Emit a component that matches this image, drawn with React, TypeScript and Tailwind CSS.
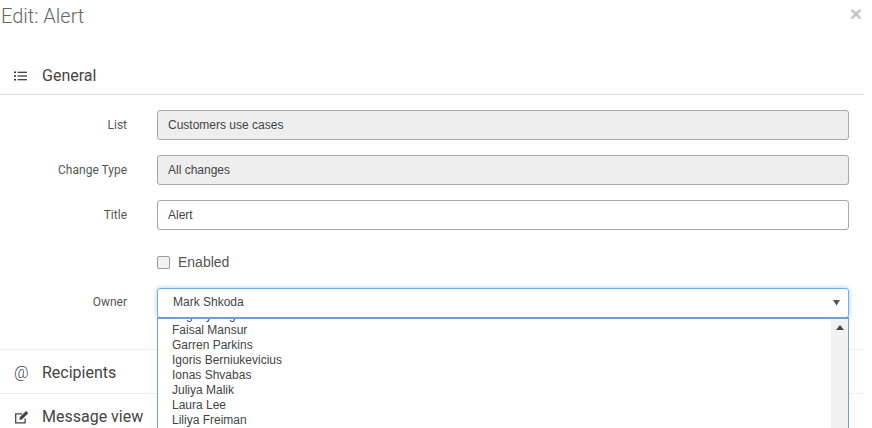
import React from "react";

const sans = "font-['Liberation_Sans',Arial,sans-serif]";
const rob = "font-['Roboto',sans-serif]";

function Label({ children }: { children: React.ReactNode }) {
  return <div className={`w-[127px] shrink-0 text-right text-[12px] text-[#555] ${rob}`}>{children}</div>;
}

function Row({ label, value, disabled, mb }: { label: string; value: string; disabled?: boolean; mb: string }) {
  return (
    <div className={`flex items-center ${mb}`}>
      <Label>{label}</Label>
      <div
        className={`ml-[30px] flex h-[30px] w-[692px] items-center rounded-[3px] border border-[#a9a9a9] pb-[1px] pl-[10px] text-[12px] text-[#444] ${sans} ${
          disabled ? "bg-[#eeeeee]" : "bg-white"
        }`}
      >
        {value}
      </div>
    </div>
  );
}

function ListIcon() {
  return (
    <svg width="13" height="10" viewBox="0 0 13 10" className="shrink-0 text-[#333]">
      <g fill="currentColor">
        <rect x="0" y="0.5" width="2" height="1.6" />
        <rect x="0" y="4.2" width="2" height="1.6" />
        <rect x="0" y="7.9" width="2" height="1.6" />
        <rect x="3.5" y="0.7" width="9.5" height="1.2" />
        <rect x="3.5" y="4.4" width="9.5" height="1.2" />
        <rect x="3.5" y="8.1" width="9.5" height="1.2" />
      </g>
    </svg>
  );
}

function EditIcon() {
  return (
    <svg width="15" height="14" viewBox="0 0 14 13" className="shrink-0 text-[#444]">
      <path d="M1 3h6.5v1.2H2.2v7.1h7.6V8H11v4.5H1z" fill="currentColor" />
      <path d="M5 9.2l.5-2.6L11.3.9l2 2-5.7 5.8z" fill="currentColor" />
    </svg>
  );
}

const names = [
  "Evgeny Yagi",
  "Faisal Mansur",
  "Garren Parkins",
  "Igoris Berniukevicius",
  "Ionas Shvabas",
  "Juliya Malik",
  "Laura Lee",
  "Liliya Freiman",
];

function SectionHead({ icon, title, pt }: { icon: React.ReactNode; title: string; pt: string }) {
  return (
    <div className={`flex h-[43px] items-center pl-[14px] ${pt}`}>
      <div className="flex w-[28px] items-center">{icon}</div>
      <span className={`text-[16px] text-[#444] ${rob}`}>{title}</span>
    </div>
  );
}

export default function App() {
  return (
    <div className="relative h-[428px] w-[872px] overflow-hidden bg-white">
      <div className="flex h-[55px] items-start justify-between">
        <h1 className={`pl-[1px] pt-[3px] text-[20px] leading-[26px] font-light text-[#666] ${rob}`}>Edit: Alert</h1>
        <span className={`mr-[10px] mt-[4px] text-[21px] leading-[20px] font-bold text-[#c4c4c4] ${sans}`}>×</span>
      </div>

      <div className="w-[864px]">
        <div className="flex h-[40px] items-center border-b border-[#dddddd] pl-[14px] pt-[2px]">
          <div className="flex w-[28px] items-center"><ListIcon /></div>
          <span className={`text-[16px] text-[#444] ${rob}`}>General</span>
        </div>

        <div className="relative h-[255px] border-b border-[#eeeeee] pt-[15px]">
          <Row label="List" value="Customers use cases" disabled mb="mb-[15px]" />
          <Row label="Change Type" value="All changes" disabled mb="mb-[15px]" />
          <Row label="Title" value="Alert" mb="mb-[16px]" />
          <div className={`mb-[10px] flex h-[32px] items-center pl-[157px] text-[14px] text-[#555] ${sans}`}>
            <span className="h-[13px] w-[13px] rounded-[2px] border border-[#9a9a9a] bg-[#f1f1f1]" />
            <span className="ml-[8px]">Enabled</span>
          </div>
          <div className="flex items-center">
            <div className="-translate-y-[1px]"><Label>Owner</Label></div>
            <div
              className={`ml-[30px] flex h-[30px] w-[692px] items-center justify-between rounded-[3px] border border-[#66afe9] pb-[1px] pl-[15px] pr-[8px] text-[12px] text-[#444] shadow-[0_0_5px_rgba(102,175,233,0.6)] ${sans}`}
            >
              <span className="-translate-y-[1px]">Mark Shkoda</span>
              <svg width="7" height="7" viewBox="0 0 7 7" className="text-[#555]">
                <path d="M0 1h7L3.5 6.5z" fill="currentColor" />
              </svg>
            </div>
          </div>
        </div>

        <div className="border-b border-[#eeeeee]">
          <SectionHead pt="pt-[2px]" icon={<span className={`text-[16px] leading-none font-light text-[#444] ${rob}`}>@</span>} title="Recipients" />
        </div>
        <SectionHead pt="pt-[2px]" icon={<EditIcon />} title="Message view" />
      </div>

      <div className={`absolute left-[157px] top-[317px] flex h-[120px] w-[692px] overflow-hidden border border-[#6f9fd8] border-t-2 bg-white text-[12px] leading-[15px] text-[#444] ${sans}`}>
        <div className="-mt-[11px] flex-1 pl-[14px]">
          {names.map((n) => (
            <div key={n} className="h-[15px]">{n}</div>
          ))}
        </div>
        <div className="flex w-[17px] shrink-0 justify-center bg-[#f1f1f1] pt-[6px]">
          <svg width="8" height="5" viewBox="0 0 8 5" className="text-[#444]">
            <path d="M4 0l4 5H0z" fill="currentColor" />
          </svg>
        </div>
      </div>
    </div>
  );
}
